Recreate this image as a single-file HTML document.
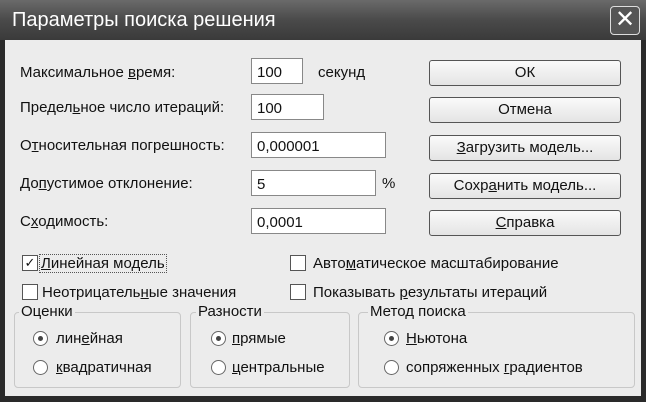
<!DOCTYPE html><html><head><meta charset="utf-8"><style>
*{margin:0;padding:0;box-sizing:border-box}
body{width:646px;height:402px;overflow:hidden;background:#2a2a2a;font-family:"Liberation Sans","DejaVu Sans",sans-serif;font-size:15px;color:#111;position:relative}
.a{position:absolute;white-space:nowrap}
#title{left:0;top:0;width:646px;height:40px;background:linear-gradient(#6a6a6a,#4a4a4a 50%,#3a3a3a);color:#fff;font-size:20px;padding:9px 0 0 12px}
#close{left:610px;top:6px;width:30px;height:29px;border:1px solid #ddd;border-radius:4px;background:#555;color:#fff;font-size:24px;line-height:26px;text-align:center}
#body{left:5px;top:40px;width:636px;height:356px;background:#ececec}
.in{background:#fff;border:1px solid #888;padding:5px 0 0 5px;height:26px}
.btn{left:429px;width:192px;height:26px;border:1px solid #555;border-radius:3px;background:linear-gradient(#fafafa,#e4e4e4);text-align:center;line-height:24px}
.cb{width:16px;height:16px;border:1px solid #555;background:#fff}
.box{border:1px solid #c8c8c8;border-radius:4px;top:312px;height:76px}
.gl{background:#ececec;padding:0 2px;top:303px}
.rd{width:15px;height:15px;border:1px solid #666;border-radius:50%;background:#fff}
.dot::after{content:"";position:absolute;left:4px;top:4px;width:5px;height:5px;border-radius:50%;background:#444}
u{text-decoration:underline}
</style></head><body>
<div class="a" id="title">Параметры поиска решения</div>
<div class="a" id="close">✕</div>
<div class="a" id="body"></div>
<div class="a" style="left:20px;top:64px">Максимальное <u>в</u>ремя:</div>
<div class="a" style="left:20px;top:99px">Предел<u>ь</u>ное число итераций:</div>
<div class="a" style="left:20px;top:137px">О<u>т</u>носительная погрешность:</div>
<div class="a" style="left:20px;top:175px">До<u>п</u>устимое отклонение:</div>
<div class="a" style="left:20px;top:213px">С<u>х</u>одимость:</div>
<div class="a in" style="left:251px;top:58px;width:52px">100</div>
<div class="a" style="left:318px;top:64px">секунд</div>
<div class="a in" style="left:251px;top:94px;width:73px">100</div>
<div class="a in" style="left:251px;top:132px;width:135px">0,000001</div>
<div class="a in" style="left:251px;top:170px;width:125px">5</div>
<div class="a" style="left:382px;top:175px">%</div>
<div class="a in" style="left:251px;top:208px;width:135px">0,0001</div>
<div class="a btn" style="top:60px">ОК</div>
<div class="a btn" style="top:97px">Отмена</div>
<div class="a btn" style="top:135px"><u>З</u>агрузить модель...</div>
<div class="a btn" style="top:173px">Сохр<u>а</u>нить модель...</div>
<div class="a btn" style="top:210px"><u>С</u>правка</div>
<div class="a cb" style="left:22px;top:255px;font-size:13px;line-height:13px;text-align:center">✓</div>
<div class="a" style="left:39px;top:254px;border:1px dotted #555;padding:0 1px"><u>Л</u>инейная модель</div>
<div class="a cb" style="left:22px;top:284px"></div>
<div class="a" style="left:42px;top:284px">Неотрицатель<u>н</u>ые значения</div>
<div class="a cb" style="left:290px;top:255px"></div>
<div class="a" style="left:313px;top:255px">Авто<u>м</u>атическое масштабирование</div>
<div class="a cb" style="left:290px;top:284px"></div>
<div class="a" style="left:313px;top:284px">Показывать <u>р</u>езультаты итераций</div>
<div class="a box" style="left:14px;width:167px"></div>
<div class="a box" style="left:190px;width:160px"></div>
<div class="a box" style="left:358px;width:277px"></div>
<div class="a gl" style="left:19px">Оценки</div>
<div class="a gl" style="left:196px">Разности</div>
<div class="a gl" style="left:368px">Метод поиска</div>
<div class="a rd dot" style="left:33px;top:331px"></div><div class="a" style="left:56px;top:330px">лин<u>е</u>йная</div>
<div class="a rd" style="left:33px;top:360px"></div><div class="a" style="left:56px;top:359px"><u>к</u>вадратичная</div>
<div class="a rd dot" style="left:211px;top:331px"></div><div class="a" style="left:232px;top:330px"><u>п</u>рямые</div>
<div class="a rd" style="left:211px;top:360px"></div><div class="a" style="left:232px;top:359px"><u>ц</u>ентральные</div>
<div class="a rd dot" style="left:384px;top:331px"></div><div class="a" style="left:406px;top:330px"><u>Н</u>ьютона</div>
<div class="a rd" style="left:384px;top:360px"></div><div class="a" style="left:406px;top:359px">сопряженных <u>г</u>радиентов</div>
</body></html>
